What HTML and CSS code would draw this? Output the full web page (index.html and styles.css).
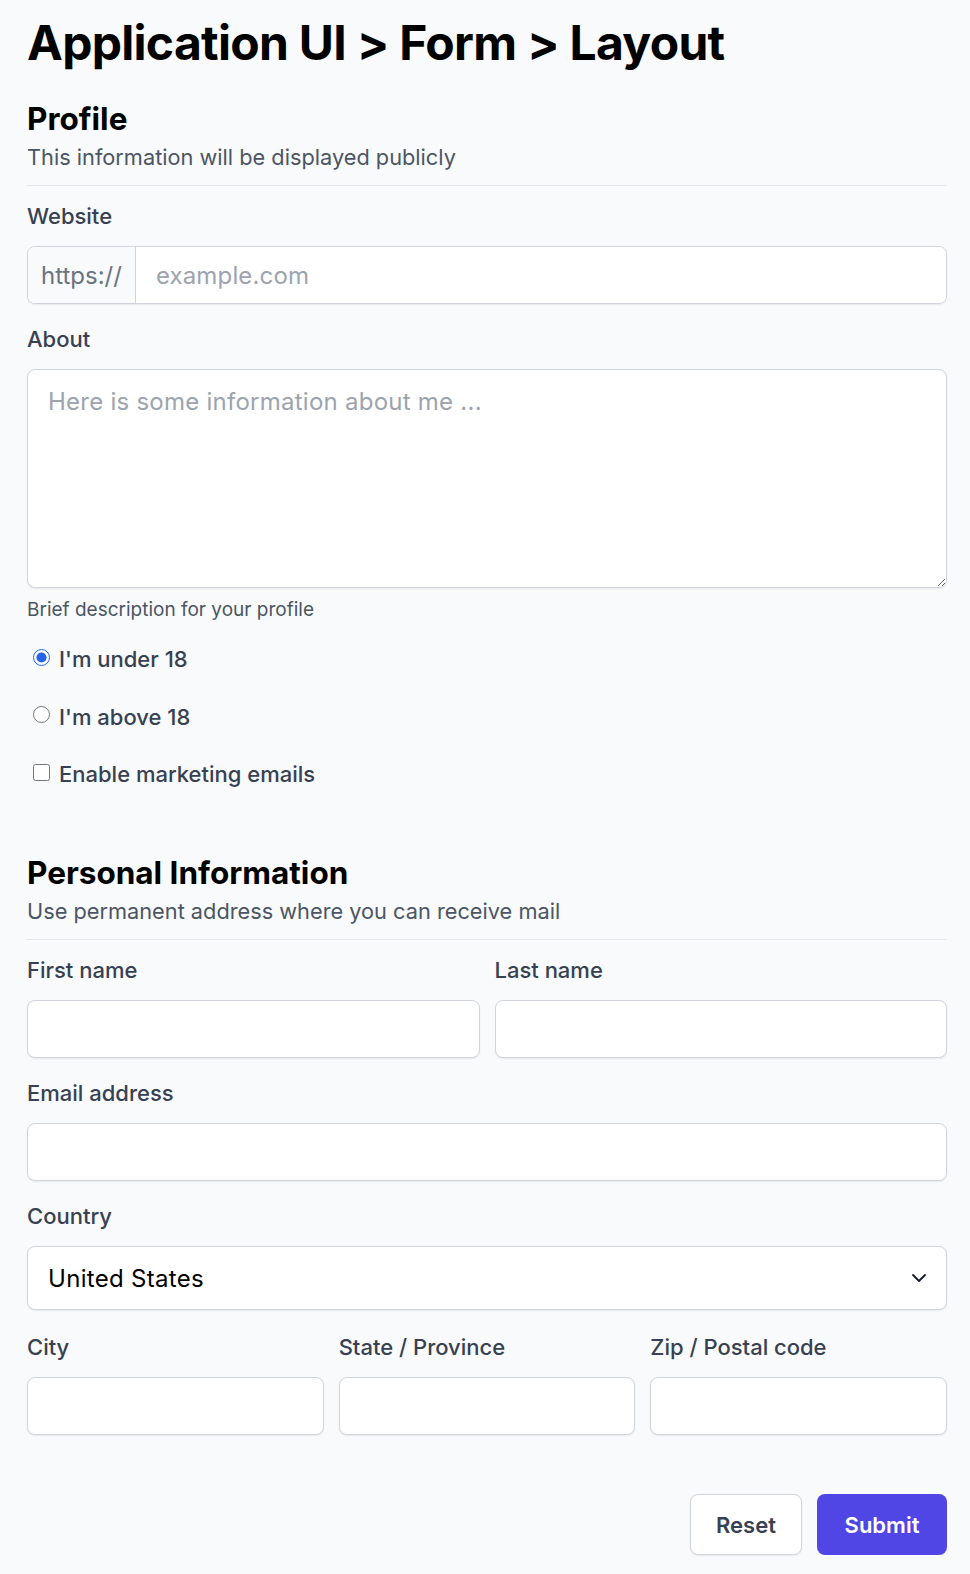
FILE: index.html
```html
<!DOCTYPE html>
<html lang="en">
<head>
<meta charset="utf-8">
<title>Application UI > Form > Layout</title>
<link rel="stylesheet" href="styles.css">
</head>
<body>
<main class="page">
  <h1 class="title">Application UI &gt; Form &gt; Layout</h1>
  <form class="form">
    <section class="section">
      <h2 class="section-title">Profile</h2>
      <p class="section-desc">This information will be displayed publicly</p>
      <hr class="divider">
      <div class="fields">
        <div class="field">
          <label class="label" for="website">Website</label>
          <div class="input-group">
            <span class="prefix">https://</span>
            <input class="input input-grouped" id="website" type="text" placeholder="example.com">
          </div>
        </div>
        <div class="field">
          <label class="label" for="about">About</label>
          <textarea class="textarea" id="about" placeholder="Here is some information about me ..."></textarea>
          <p class="hint">Brief description for your profile</p>
        </div>
      </div>
      <div class="choices">
        <label class="choice"><input class="radio" type="radio" name="age" checked><span>I'm under 18</span></label>
        <label class="choice"><input class="radio" type="radio" name="age"><span>I'm above 18</span></label>
        <label class="choice"><input class="checkbox" type="checkbox"><span>Enable marketing emails</span></label>
      </div>
    </section>

    <section class="section section-personal">
      <h2 class="section-title">Personal Information</h2>
      <p class="section-desc">Use permanent address where you can receive mail</p>
      <hr class="divider">
      <div class="fields">
        <div class="grid-2">
          <div class="field">
            <label class="label" for="first">First name</label>
            <input class="input" id="first" type="text">
          </div>
          <div class="field">
            <label class="label" for="last">Last name</label>
            <input class="input" id="last" type="text">
          </div>
        </div>
        <div class="field">
          <label class="label" for="email">Email address</label>
          <input class="input" id="email" type="email">
        </div>
        <div class="field">
          <label class="label" for="country">Country</label>
          <div class="select-wrap">
            <select class="select" id="country">
              <option>United States</option>
              <option>Canada</option>
              <option>Mexico</option>
            </select>
            <svg class="chevron" width="20" height="20" viewBox="0 0 20 20" fill="none" stroke="#111827" stroke-width="1.8" stroke-linecap="round" stroke-linejoin="round"><path d="M4 7l6 6 6-6"/></svg>
          </div>
        </div>
        <div class="grid-3">
          <div class="field">
            <label class="label" for="city">City</label>
            <input class="input" id="city" type="text">
          </div>
          <div class="field">
            <label class="label" for="state">State / Province</label>
            <input class="input" id="state" type="text">
          </div>
          <div class="field">
            <label class="label" for="zip">Zip / Postal code</label>
            <input class="input" id="zip" type="text">
          </div>
        </div>
      </div>
    </section>

    <div class="actions">
      <button class="btn btn-secondary" type="reset">Reset</button>
      <button class="btn btn-primary" type="submit">Submit</button>
    </div>
  </form>
</main>
</body>
</html>
```

FILE: styles.css
```css
* { box-sizing: border-box; }

html, body {
  margin: 0;
  padding: 0;
  background: #f9fafb;
}

body {
  font-family: Inter, "Noto Sans", "Liberation Sans", sans-serif;
  color: #111827;
}

.page {
  padding: 15px 23px 18px 27px;
}

.title {
  margin: 0;
  font-size: 48px;
  line-height: 56px;
  font-weight: 700;
  letter-spacing: -0.7px;
  color: #000;
}

.form {
  margin: 30px 0 0;
}

.section-title {
  margin: 0;
  font-size: 31.5px;
  line-height: 36px;
  font-weight: 700;
  color: #000;
}

.section-desc {
  margin: 6px 0 0;
  font-size: 21.75px;
  line-height: 28px;
  color: #4b5563;
}

.divider {
  margin: 14px 0 16px;
  border: 0;
  border-top: 1.5px solid #e5e7eb;
  height: 0;
}

.fields {
  display: flex;
  flex-direction: column;
  gap: 21px;
}

.field {
  display: flex;
  flex-direction: column;
  min-width: 0;
}

.label {
  display: block;
  margin-bottom: 16px;
  font-size: 22px;
  line-height: 28px;
  font-weight: 500;
  color: #374151;
}

.input,
.textarea,
.select {
  font-family: inherit;
  font-size: 24px;
  color: #111827;
  background: #fff;
  border: 1.5px solid #d1d5db;
  border-radius: 8px;
  box-shadow: 0 1px 2px rgba(0, 0, 0, 0.07);
  outline: none;
}

.input {
  width: 100%;
  height: 58px;
  padding: 0 20px;
}

.input::placeholder,
.textarea::placeholder {
  color: #9ca3af;
}

.input-group {
  display: flex;
  height: 58px;
  border: 1.5px solid #d1d5db;
  border-radius: 8px;
  overflow: hidden;
  box-shadow: 0 1px 2px rgba(0, 0, 0, 0.07);
}

.prefix {
  display: flex;
  align-items: center;
  padding: 0 13px;
  background: #f9fafb;
  color: #6b7280;
  font-size: 24px;
  border-right: 1.5px solid #d1d5db;
}

.input-grouped {
  flex: 1;
  height: 100%;
  border: 0;
  border-radius: 0;
  box-shadow: none;
  letter-spacing: 0.15px;
}

.textarea {
  display: block;
  width: 100%;
  height: 219px;
  padding: 18px 20px;
  line-height: 28px;
  letter-spacing: 0.25px;
  resize: vertical;
}

.hint {
  margin: 9px 0 0;
  font-size: 19px;
  line-height: 26px;
  color: #4b5563;
}

.choices {
  display: flex;
  flex-direction: column;
  gap: 29.5px;
  margin-top: 22px;
  padding-left: 6px;
}

.choice {
  display: flex;
  align-items: center;
  gap: 9px;
  font-size: 22px;
  line-height: 28px;
  font-weight: 500;
  color: #374151;
}

.radio,
.checkbox {
  margin: 0;
  width: 17px;
  height: 17px;
  accent-color: #2563eb;
  flex: none;
  position: relative;
  top: -2px;
}

.section-personal {
  margin-top: 67px;
}

.grid-2 {
  display: grid;
  grid-template-columns: 1fr 1fr;
  column-gap: 15px;
}

.grid-3 {
  display: grid;
  grid-template-columns: 1fr 1fr 1fr;
  column-gap: 15px;
  margin-top: 2px;
}

.select-wrap {
  position: relative;
}

.select {
  display: block;
  width: 100%;
  height: 64px;
  padding: 0 50px 0 20px;
  appearance: none;
  -webkit-appearance: none;
  letter-spacing: 0.3px;
  color: #000;
}

.chevron {
  position: absolute;
  right: 18px;
  top: 22px;
  pointer-events: none;
}

.actions {
  display: flex;
  justify-content: flex-end;
  gap: 15px;
  margin-top: 59px;
}

.btn {
  height: 61px;
  padding: 0;
  font-family: inherit;
  font-size: 22px;
  font-weight: 600;
  border-radius: 8px;
  cursor: pointer;
}

.btn-secondary {
  background: #fff;
  color: #374151;
  border: 1.5px solid #d1d5db;
  box-shadow: 0 1px 2px rgba(0, 0, 0, 0.07);
  width: 112px;
}

.btn-primary {
  background: #4f46e5;
  color: #fff;
  border: 0;
  width: 130px;
}
```
